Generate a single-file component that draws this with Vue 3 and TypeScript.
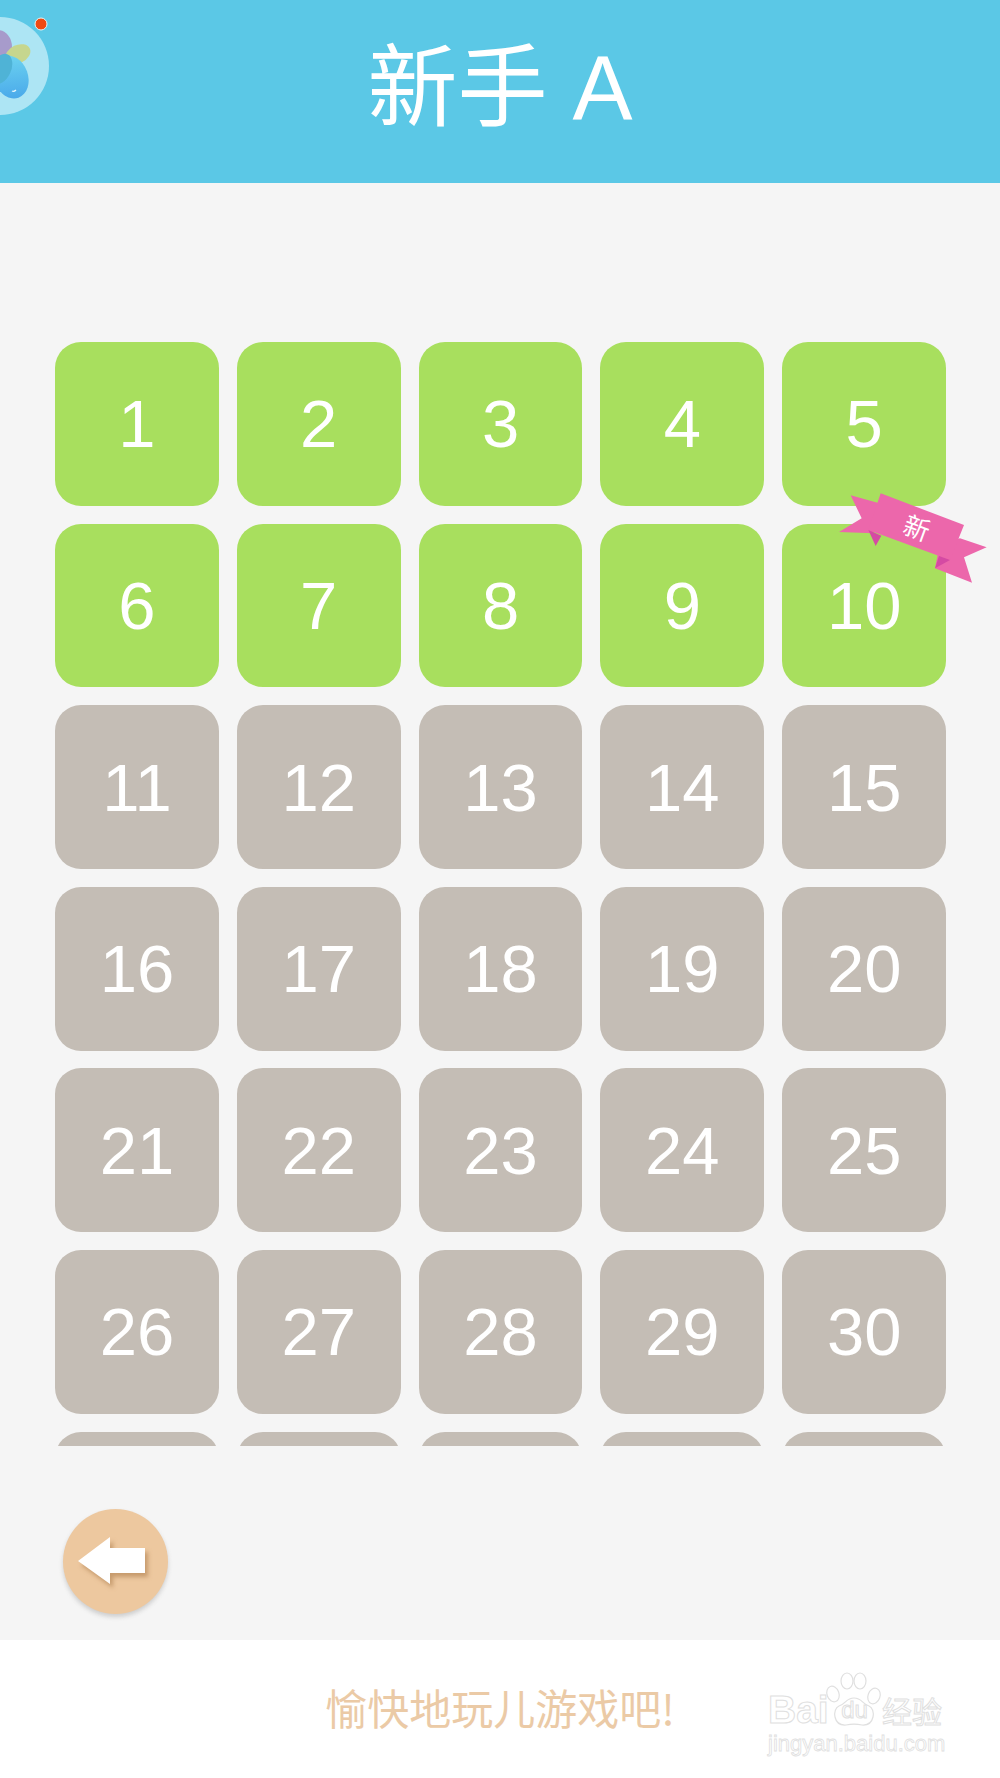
<template>
  <div class="page">
    <header class="top">
      <div class="logo">
        <svg width="60" height="120" viewBox="0 0 60 120">
          <defs>
            <linearGradient id="drop" x1="0.6" y1="0" x2="0.4" y2="1">
              <stop offset="0" stop-color="#6cd3f0" />
              <stop offset="1" stop-color="#4aa9ea" />
            </linearGradient>
          </defs>
          <circle cx="0" cy="66" r="49" fill="#ade5f4" />
          <ellipse cx="-2" cy="47" rx="14" ry="17" fill="#a79bcb" />
          <ellipse cx="18" cy="54" rx="13" ry="9" transform="rotate(-25 18 54)" fill="#c6d68e" />
          <ellipse cx="11" cy="77" rx="17" ry="22" transform="rotate(-20 11 77)" fill="url(#drop)" />
          <ellipse cx="1" cy="69" rx="10" ry="16" transform="rotate(25 1 69)" fill="#4fb3d6" />
          <path d="M12 91q2 1 4-1" stroke="#e6f7fd" stroke-width="1.2" fill="none" />
          <circle cx="41" cy="24" r="6" fill="#f04a12" stroke="#e8f6f5" stroke-width="1" />
        </svg>
      </div>
      <h1 class="title">新手 A</h1>
    </header>

    <main class="content">
      <div class="levels">
        <div class="grid">
          <div v-for="n in levels" :key="n" class="tile" :class="{ open: n <= unlocked }">
            {{ n <= 30 ? n : '' }}
          </div>
        </div>
      </div>
      <button class="back" type="button" aria-label="back">
        <svg width="70" height="50" viewBox="0 0 70 50">
          <path d="M0 24 32 0V11H67V36H32V47Z" fill="#fff" />
        </svg>
      </button>
    </main>

    <footer class="bottom">
      <span class="slogan">愉快地玩儿游戏吧!</span>
      <div class="mark">
        <svg class="paw" width="60" height="56" viewBox="0 0 60 56">
          <g fill="none" stroke="#e0e0e0" stroke-width="1.2">
            <ellipse cx="9" cy="22" rx="6" ry="8" transform="rotate(-20 9 22)" />
            <ellipse cx="23" cy="9" rx="6" ry="8" />
            <ellipse cx="36" cy="9" rx="6" ry="8" />
            <ellipse cx="50" cy="24" rx="6" ry="8" transform="rotate(20 50 24)" />
            <path d="M30 26C38 26 38 32 45 34 52 37 51 54 38 53 33 52 27 52 22 53 9 54 8 37 15 34 22 32 22 26 30 26Z" />
          </g>
        </svg>
        <div class="mark-row">
          <span class="bai">Bai</span><span class="du">du</span><span class="jy">经验</span>
        </div>
        <div class="url">jingyan.baidu.com</div>
      </div>
    </footer>

    <div class="ribbon">
      <svg width="240" height="140" viewBox="0 0 720 420">
        <path d="M272 76 358 100 340 190 237 186 305 145Z" fill="#ec67ab" />
        <path d="M600 205 680 232 612 262 636 338 525 295 540 220Z" fill="#ec67ab" />
        <path d="M362 70 612 165 570 270 325 180Z" fill="#ec67ab" />
        <path d="M325 180 364 197 347 228Z" fill="#d54aa3" />
        <path d="M570 270 525 295 537 258Z" fill="#d54aa3" />
        <text x="470" y="203" transform="rotate(20 470 175)" text-anchor="middle" class="ribbon-text">新</text>
      </svg>
    </div>
  </div>
</template>

<script setup lang="ts">
const levels: number[] = Array.from({ length: 35 }, (_, i) => i + 1)
const unlocked = 10
</script>

<style>
html,
body {
  margin: 0;
  background: #f5f5f5;
}
</style>

<style scoped>
.page {
  position: relative;
  width: 1000px;
  height: 1778px;
  overflow: hidden;
  display: flex;
  flex-direction: column;
  background: #f5f5f5;
  font-family: "Liberation Sans", "Noto Sans CJK SC", sans-serif;
}

.top {
  position: relative;
  height: 183px;
  flex: none;
  display: flex;
  justify-content: center;
  padding-top: 43px;
  box-sizing: border-box;
  background: #5bc8e6;
}

.logo {
  position: absolute;
  left: 0;
  top: 0;
  line-height: 0;
}

.title {
  margin: 0;
  color: #fff;
  font-size: 90px;
  font-weight: 400;
  line-height: 1;
  font-family: "Liberation Sans", "Noto Sans CJK SC", sans-serif;
}

.content {
  flex: 1;
  display: flex;
  flex-direction: column;
  padding: 159px 54px 0 55px;
}

.levels {
  height: 1104px;
  overflow: hidden;
  flex: none;
}

.grid {
  display: grid;
  grid-template-columns: repeat(5, 1fr);
  gap: 17.8px 18px;
}

.tile {
  aspect-ratio: 1;
  display: flex;
  align-items: center;
  justify-content: center;
  border-radius: 26px;
  background: #c4bdb5;
  color: #fff;
  font-family: "Liberation Sans", sans-serif;
  font-size: 67px;
}

.tile.open {
  background: #a8df5e;
}

.back {
  width: 105px;
  height: 105px;
  margin: 63px 0 0 8px;
  padding: 0 6px 0 0;
  flex: none;
  display: flex;
  align-items: center;
  justify-content: center;
  border: none;
  border-radius: 50%;
  background: #edc89f;
  box-shadow: 0 3px 4px rgba(120, 120, 120, 0.3);
}

.back svg {
  filter: drop-shadow(3px 4px 2px rgba(160, 110, 60, 0.5));
}

.bottom {
  position: relative;
  height: 138px;
  flex: none;
  display: flex;
  align-items: center;
  justify-content: center;
  padding-bottom: 6px;
  box-sizing: border-box;
  background: #fff;
}

.slogan {
  color: #ebcaa6;
  font-size: 42px;
  font-family: "Noto Sans CJK SC", sans-serif;
}

.mark {
  position: absolute;
  left: 768px;
  top: 32px;
  width: 180px;
}

.paw {
  position: absolute;
  left: 56px;
  top: 0;
}

.mark-row {
  display: flex;
  align-items: center;
  height: 32px;
  margin-top: 22px;
  color: transparent;
  -webkit-text-stroke: 1px #e0e0e0;
}

.bai {
  width: 59px;
  font-size: 39px;
  font-family: "Liberation Sans", sans-serif;
  font-weight: 700;
}

.du {
  width: 55px;
  text-align: center;
  font-size: 24px;
  font-family: "Liberation Sans", sans-serif;
}

.jy {
  font-size: 30px;
  font-family: "Noto Sans CJK SC", sans-serif;
}

.url {
  margin-top: 6px;
  color: transparent;
  -webkit-text-stroke: 0.8px #e0e0e0;
  font-size: 22px;
  line-height: 24px;
  white-space: nowrap;
}

.ribbon {
  position: absolute;
  left: 760px;
  top: 470px;
  line-height: 0;
}

.ribbon-text {
  fill: #fff;
  font-size: 78px;
  font-family: "Noto Sans CJK SC", sans-serif;
}
</style>
